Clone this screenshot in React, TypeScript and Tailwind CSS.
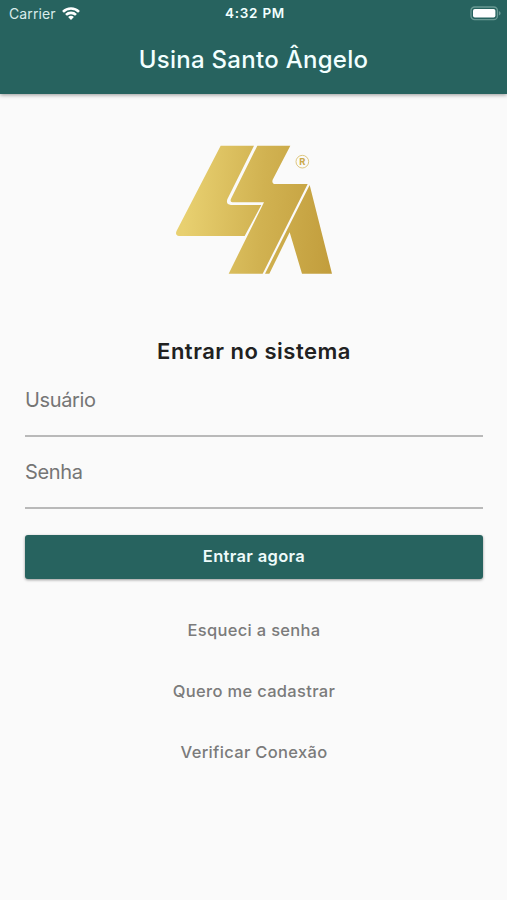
import type { ReactNode } from 'react';

const links = ['Esqueci a senha', 'Quero me cadastrar', 'Verificar Conexão'];

function WifiIcon() {
    return (
        <svg className="w-[18px] h-[14px]" viewBox="0 0 18 14" fill="none" stroke="#fff" strokeWidth="2.6">
            <path d="M1 4.8a11.3 11.3 0 0 1 16 0" />
            <path d="M4 7.9a7.1 7.1 0 0 1 10 0" />
            <path d="M9 13 6.1 10.1a4.1 4.1 0 0 1 5.8 0z" fill="#fff" stroke="none" />
        </svg>
    );
}

function BatteryIcon() {
    return (
        <svg className="w-[31px] h-[15px]" viewBox="0 0 31 15">
            <rect x="1" y="1" width="26.4" height="12.6" rx="3.6" fill="none" stroke="#6a9a94" strokeWidth="1.3" />
            <rect x="3" y="3" width="22.4" height="8.6" rx="1.8" fill="#fff" />
            <path d="M28.9 5.2c1.2.4 1.7 1.2 1.7 2.1s-.5 1.7-1.7 2.1z" fill="#6a9a94" />
        </svg>
    );
}

function Logo() {
    return (
        <svg className="w-40 h-[130px]" viewBox="27 30 480 390">
            <defs>
                <linearGradient id="gold" gradientUnits="userSpaceOnUse" x1="55" y1="270" x2="520" y2="300">
                    <stop offset="0" stopColor="#e8d070" />
                    <stop offset="0.5" stopColor="#d1b251" />
                    <stop offset="1" stopColor="#c19c3b" />
                </linearGradient>
            </defs>
            <g fill="url(#gold)">
                <path d="M167 32H267L187 193Q182 209 198 210H289L239 303H42Q29 301 35 287Z" />
                <path d="M277 32H376L323 134Q319 147 332 147H428L293 416H191L297 202H202Q194 201 198 191Z" />
                <path d="M434 150 501 416H411L374 292 313 416H300Z" />
            </g>
            <circle cx="412" cy="80" r="19" fill="none" stroke="#d9bc69" strokeWidth="2.5" />
            <text x="412" y="90" textAnchor="middle" fontFamily="Inter, sans-serif" fontSize="28" fontWeight="700" fill="#cba949">
                R
            </text>
        </svg>
    );
}

function Field({ children }: { children: ReactNode }) {
    return (
        <div className="h-[72px] border-b-2 border-[#b9b9b9] pt-[20px] text-[20px] leading-[30px] tracking-[-0.35px] text-[#757575]">
            {children}
        </div>
    );
}

export default function App() {
    return (
        <div className="flex h-[900px] w-full flex-col bg-[#fafafa] font-['Inter','Roboto',sans-serif]">
            <header className="relative h-[94px] bg-[#27635f] text-[#f2ffff] shadow-[0_1px_4px_rgba(0,0,0,0.4)]">
                <div className="grid h-[27px] grid-cols-[1fr_auto_1fr] items-center pl-[9px] pr-[6px]">
                    <div className="flex items-center gap-[6px]">
                        <span className="text-[14px] tracking-[0.1px] text-[#d9eceb]">Carrier</span>
                        <WifiIcon />
                    </div>
                    <span className="text-center text-[13.5px] font-semibold tracking-[0.75px]">4:32 PM</span>
                    <div className="flex justify-end">
                        <BatteryIcon />
                    </div>
                </div>
                <h1 className="text-center text-[24px] leading-[66px] font-medium tracking-[0.28px]">Usina Santo Ângelo</h1>
            </header>

            <main className="flex flex-col pr-6 pl-[25px] pt-[51px]">
                <div className="flex justify-center">
                    <Logo />
                </div>
                <h2 className="mt-[61px] text-center text-[22px] leading-[30px] font-semibold tracking-[0.5px] text-[#212121]">
                    Entrar no sistema
                </h2>
                <div className="-mt-[1px]">
                    <Field>Usuário</Field>
                    <Field>Senha</Field>
                </div>
                <button className="mt-[26px] h-[44px] rounded-[3px] bg-[#27635f] pb-px text-[16.5px] font-semibold tracking-[0.34px] text-[#eefafa] shadow-[0_1px_3px_rgba(0,0,0,0.4)]">
                    Entrar agora
                </button>
                <nav className="mt-[21px] flex flex-col items-center">
                    {links.map((label) => (
                        <a key={label} className="text-[16.5px] leading-[61px] font-medium tracking-[0.32px] text-[#7b7b7b]">
                            {label}
                        </a>
                    ))}
                </nav>
            </main>
        </div>
    );
}
